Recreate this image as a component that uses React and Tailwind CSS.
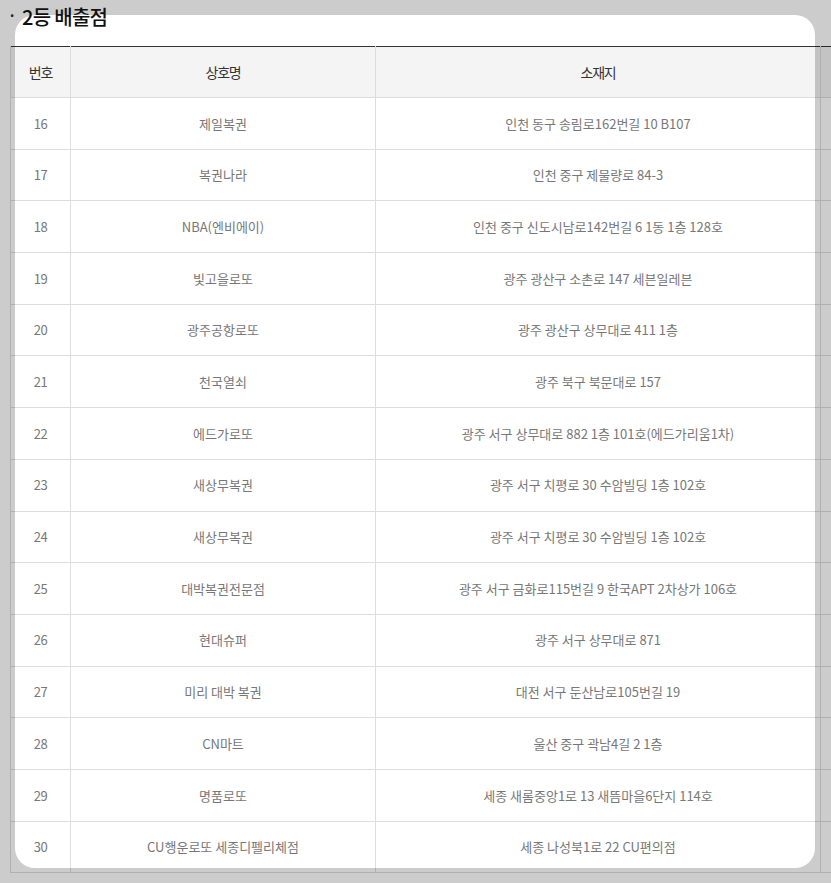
import React from "react";

const rows = [
  ["16", "제일복권", "인천 동구 송림로162번길 10 B107"],
  ["17", "복권나라", "인천 중구 제물량로 84-3"],
  ["18", "NBA(엔비에이)", "인천 중구 신도시남로142번길 6 1동 1층 128호"],
  ["19", "빛고을로또", "광주 광산구 소촌로 147 세븐일레븐"],
  ["20", "광주공항로또", "광주 광산구 상무대로 411 1층"],
  ["21", "천국열쇠", "광주 북구 북문대로 157"],
  ["22", "에드가로또", "광주 서구 상무대로 882 1층 101호(에드가리움1차)"],
  ["23", "새상무복권", "광주 서구 치평로 30 수암빌딩 1층 102호"],
  ["24", "새상무복권", "광주 서구 치평로 30 수암빌딩 1층 102호"],
  ["25", "대박복권전문점", "광주 서구 금화로115번길 9 한국APT 2차상가 106호"],
  ["26", "현대슈퍼", "광주 서구 상무대로 871"],
  ["27", "미리 대박 복권", "대전 서구 둔산남로105번길 19"],
  ["28", "CN마트", "울산 중구 곽남4길 2 1층"],
  ["29", "명품로또", "세종 새롬중앙1로 13 새뜸마을6단지 114호"],
  ["30", "CU행운로또 세종디펠리체점", "세종 나성북1로 22 CU편의점"],
];

export default function App() {
  return (
    <div
      className="relative w-[831px] h-[883px] overflow-hidden bg-white"
      style={{ fontFamily: '"Noto Sans CJK KR", "Noto Sans", sans-serif' }}
    >
      <div className="relative z-20 h-[46px] pl-[8px] flex items-start">
        <span className="text-[14px] leading-[30px] font-bold text-[#222] w-[14px]">·</span>
        <h2 className="text-[20px] leading-[34px] font-medium text-[#111] tracking-[-0.7px]">2등 배출점</h2>
      </div>
      <div className="pl-[10px]">
        <table className="w-[1000px] table-fixed border-collapse border-t border-t-[#333]">
          <colgroup>
            <col className="w-[60px]" />
            <col className="w-[305px]" />
            <col className="w-[445px]" />
            <col className="w-[190px]" />
          </colgroup>
          <thead>
            <tr className="h-[51px] bg-[#f4f4f4]">
              {["번호", "상호명", "소재지", ""].map((h, i) => (
                <th
                  key={i}
                  className="border border-[#dddddd] border-t-0 text-[14px] font-normal text-[#333] tracking-[-1.2px] text-center"
                >
                  {h}
                </th>
              ))}
            </tr>
          </thead>
          <tbody>
            {rows.map((r) => (
              <tr key={r[0]} className="h-[51.7px]">
                <td className="border border-[#dddddd] text-center text-[13px] text-[#777] tracking-[-0.4px]">{r[0]}</td>
                <td className="border border-[#dddddd] text-center text-[13px] text-[#777] tracking-[0px]">{r[1]}</td>
                <td className="border border-[#dddddd] text-center text-[13px] text-[#777] tracking-[0px]">{r[2]}</td>
                <td className="border border-[#dddddd]"></td>
              </tr>
            ))}
          </tbody>
        </table>
      </div>
      <div className="absolute z-10 left-[15px] top-[15px] w-[800px] h-[853px] rounded-[20px] shadow-[0_0_0_2000px_rgba(0,0,0,0.2)] pointer-events-none" />
    </div>
  );
}
